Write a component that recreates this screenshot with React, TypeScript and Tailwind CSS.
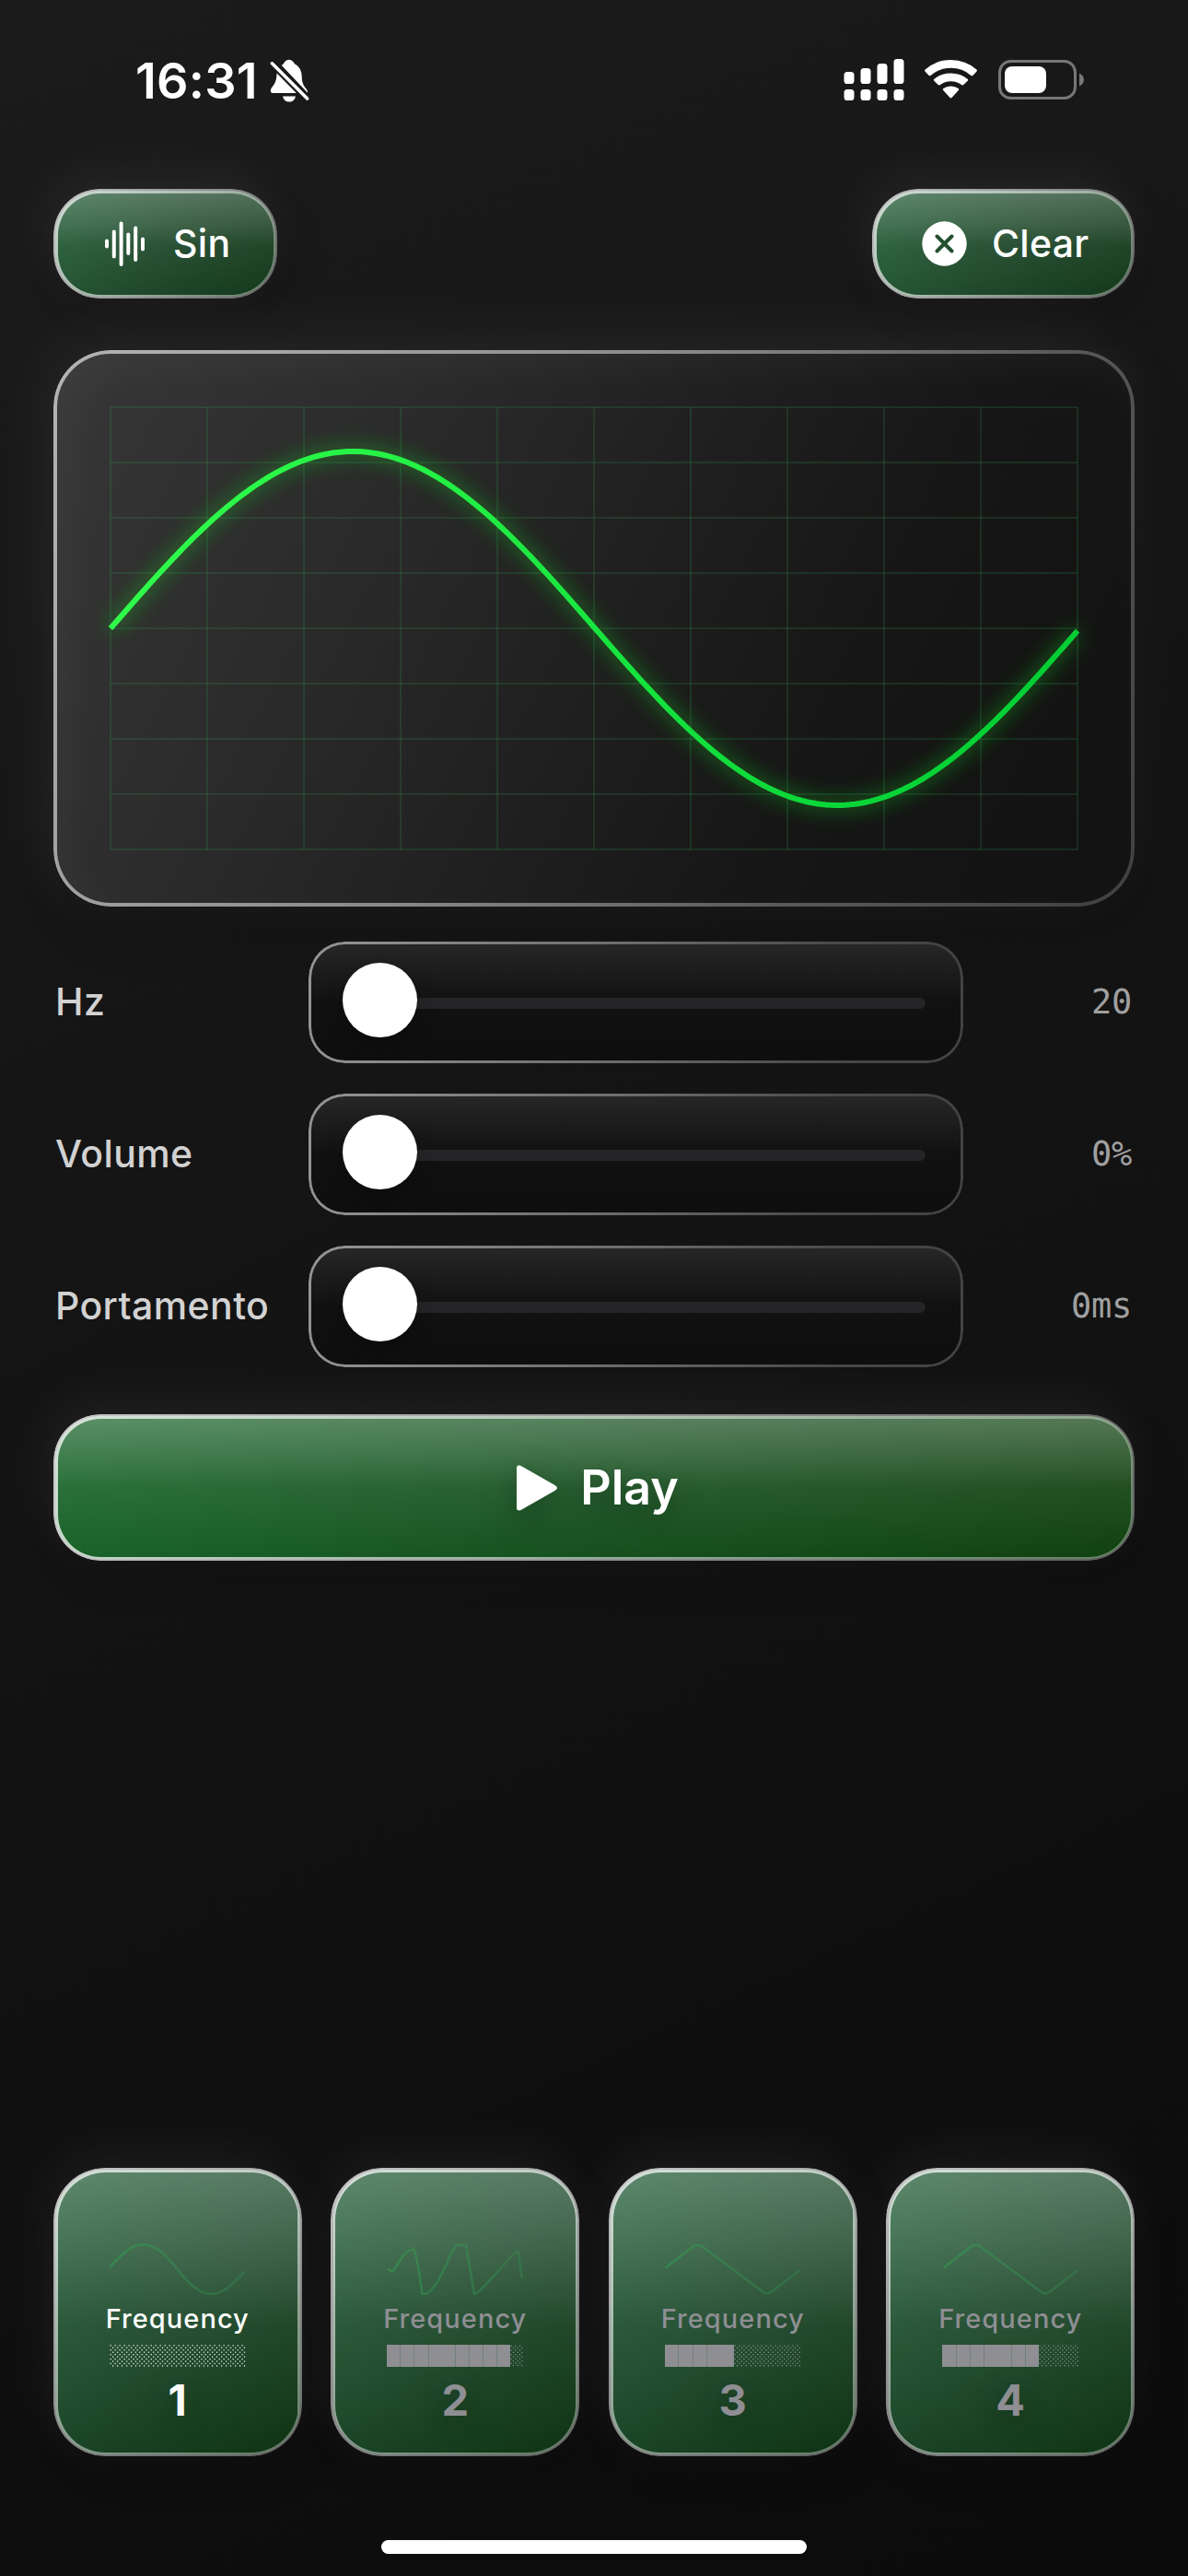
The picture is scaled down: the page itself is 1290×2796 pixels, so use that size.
import type { ReactNode } from "react";

type SliderRow = { label: string; value: string };
type Preset = { id: number; active?: boolean; level: number; wave: string };

const SINE_SAMPLES = 200;

function sinePath(width: number, mid: number, amp: number, cycles: number) {
  let d = "";
  for (let i = 0; i <= SINE_SAMPLES; i++) {
    const t = i / SINE_SAMPLES;
    const x = t * width;
    const y = mid - amp * Math.sin(t * cycles * Math.PI * 2);
    d += `${i === 0 ? "M" : "L"}${x.toFixed(2)} ${y.toFixed(2)}`;
  }
  return d;
}

const SLIDERS: SliderRow[] = [
  { label: "Hz", value: "20" },
  { label: "Volume", value: "0%" },
  { label: "Portamento", value: "0ms" },
];

const TRIANGLE = "M0.5 26.5L31 3Q35.5 0.5 40 3L107 53Q111 55.5 115 53L146 29.5";

const PRESETS: Preset[] = [
  { id: 1, active: true, level: 0, wave: "" },
  {
    id: 2,
    level: 9,
    wave: "M0 28L5 30.5C10 26 14 15 19 11Q24 6.5 28.5 6.5C33 18 35 38 37.5 55C48 57 58 35 64 22Q70 7 75.5 1.5L85 1.5L94 55.5L100 51.5L115 35.5L131 17.5Q138 9.5 141.5 9L146 38",
  },
  { id: 3, level: 5, wave: TRIANGLE },
  { id: 4, level: 7, wave: TRIANGLE },
];

/** Diagonal hairline drawn centred on the edge of its rounded parent. */
function Rim({ className }: { className: string }) {
  return (
    <div
      className={`pointer-events-none absolute [mask:linear-gradient(#000_0_0)_content-box_exclude,linear-gradient(#000_0_0)] ${className}`}
    />
  );
}

function GlassButton({ className, rim, children }: { className: string; rim: string; children: ReactNode }) {
  return (
    <button
      className={`relative flex items-center text-white shadow-[-6px_-14px_56px_rgba(255,255,255,0.07),12px_18px_44px_rgba(0,0,0,0.16)] ${className}`}
    >
      {children}
      <Rim className={`-inset-[2.25px] p-[4.5px] ${rim}`} />
    </button>
  );
}

function StatusBar() {
  return (
    <div className="flex h-[207px] items-start justify-between pr-[113px] pl-[147px] text-white">
      <div className="flex pt-[55px]">
        <span className="w-[132px] text-[54px] leading-[65px] font-semibold tracking-[0.2px] whitespace-nowrap">
          16:31
        </span>
        <svg className="mt-[9px] ml-[14px]" width="43" height="48" viewBox="0 0 43 48" fill="white">
          <path d="M7.700 14.500L29.500 37H3.200Q0.600 37 0.800 34Q1 32 4 28.500Q7 24.500 7.500 17Z" />
          <path d="M13.200 6.500Q15.300 5.500 15.800 3.500Q17.500 0.800 20.800 0.800Q24 0.800 25.800 3.500Q26.400 5.500 28.500 6.300Q34.500 10 34.700 19Q34.800 27 38.500 31.200Q41.600 34.400 41 36.800L13 7.200Z" />
          <path d="M14 40.600H28Q26.800 46.600 21 46.600Q15.200 46.600 14 40.600Z" />
          <path d="M2.200 4.300L40.800 43.500" stroke="#191919" strokeWidth="8" />
          <path d="M2.400 4.800L40.600 43" stroke="white" strokeWidth="3.600" strokeLinecap="round" />
        </svg>
      </div>
      <div className="flex items-start pt-[63px]">
        <svg width="68" height="48" viewBox="0 0 68 48" fill="white">
          <rect x="1.500" y="15" width="11" height="13" rx="3.600" />
          <rect x="19.500" y="11" width="11" height="17" rx="3.600" />
          <rect x="37.500" y="6" width="11" height="22" rx="3.600" />
          <rect x="55.500" y="1" width="11" height="27" rx="3.600" />
          <rect x="1.500" y="34" width="11" height="12" rx="3.600" />
          <rect x="19.500" y="34" width="11" height="12" rx="3.600" />
          <rect x="37.500" y="34" width="11" height="12" rx="3.600" />
          <rect x="55.500" y="34" width="11" height="12" rx="3.600" />
        </svg>
        <svg className="ml-[20px]" width="59" height="46" viewBox="0 0 59 46" fill="white">
          <path d="M1.500 14.500Q0.600 13.500 1.600 12.500Q13.500 2 29.500 2Q45.500 2 57.400 12.500Q58.400 13.500 57.500 14.500L53.300 18.900Q52.400 19.800 51.400 18.900Q42 10.800 29.500 10.800Q17 10.800 7.600 18.900Q6.600 19.800 5.700 18.900Z" />
          <path d="M11.300 24.700Q10.400 23.700 11.400 22.800Q19 16.500 29.500 16.500Q40 16.500 47.600 22.800Q48.600 23.700 47.700 24.700L43.300 29.100Q42.400 30 41.300 29.200Q36.200 25.200 29.500 25.200Q22.800 25.200 17.700 29.200Q16.600 30 15.700 29.100Z" />
          <path d="M21.200 35Q20.200 34 21.300 33.100Q24.800 30.500 29.500 30.500Q34.200 30.500 37.700 33.100Q38.800 34 37.800 35L30.500 43.100Q29.500 44 28.500 43.100Z" />
        </svg>
        <svg className="-mr-px ml-[22px]" width="94" height="46" viewBox="0 0 94 46">
          <rect x="1.500" y="3.500" width="82" height="40" rx="12" fill="none" stroke="#777777" strokeWidth="3" />
          <rect x="7" y="9" width="45" height="29" rx="8" fill="white" />
          <path d="M88 16.500Q93 19 93 23.500Q93 28 88 30.500Z" fill="#777777" />
        </svg>
      </div>
    </div>
  );
}

function Oscilloscope() {
  return (
    <section className="relative mt-[60px] h-[600px] rounded-[60px] bg-[linear-gradient(117deg,#373737_0%,#2a2a2a_30%,#1f1f1f_52%,#161616_72%,#121212_100%)] p-[60px] shadow-[-10px_-14px_70px_rgba(255,255,255,0.07),14px_24px_60px_rgba(0,0,0,0.16),inset_14px_14px_50px_rgba(255,255,255,0.04)]">
      <svg className="block overflow-visible" width="1050" height="480" viewBox="0 0 1050 480">
        <defs>
          <linearGradient id="trace" x1="0" y1="0" x2="1050" y2="400" gradientUnits="userSpaceOnUse">
            <stop offset="0" stopColor="#33ff4d" />
            <stop offset="1" stopColor="#00cc33" />
          </linearGradient>
          <filter id="halo" x="-100" y="-100" width="1250" height="680" filterUnits="userSpaceOnUse">
            <feGaussianBlur stdDeviation="11" />
          </filter>
        </defs>
        <g stroke="#33a65a" strokeOpacity="0.18" strokeWidth="2">
          {Array.from({ length: 11 }, (_, i) => (
            <line key={`v${i}`} x1={i * 105} x2={i * 105} y1="0" y2="480" />
          ))}
          {Array.from({ length: 9 }, (_, i) => (
            <line key={`h${i}`} y1={i * 60} y2={i * 60} x1="0" x2="1050" />
          ))}
        </g>
        <g fill="none">
          <path
            d={sinePath(1050, 240, 192, 0.9978)}
            stroke="#12c81f"
            strokeWidth="10"
            filter="url(#halo)"
            opacity="0.55"
          />
          <path d={sinePath(1050, 240, 192, 0.9978)} stroke="url(#trace)" strokeWidth="6" />
        </g>
      </svg>
      <Rim className="-inset-[2px] rounded-[62px] bg-[linear-gradient(117deg,#b4b4b4_0%,#8a8a8a_45%,#585858_75%,#404040_100%)] p-[4px]" />
    </section>
  );
}

function Slider({ label, value }: SliderRow) {
  return (
    <div className="flex h-[129px] items-center gap-[36px]">
      <span className="w-[240px] text-[41px] font-medium tracking-[0.4px] whitespace-nowrap text-[#d2d2d2]">{label}</span>
      <div className="relative flex h-[129px] w-[708px] items-center rounded-[38px] bg-[linear-gradient(180deg,#272727_0%,#111111_50%,#0e0e0e_100%)] px-[39px]">
        <div className="mt-[3px] h-[12px] w-full rounded-full bg-[#252527]" />
        <div className="absolute top-[22px] left-[35.500px] size-[81px] rounded-full bg-white shadow-[0_8px_20px_rgba(0,0,0,0.25)]" />
        <Rim className="-inset-[1.500px] rounded-[39.500px] bg-[linear-gradient(100deg,#959595_0%,#6e6e6e_45%,#484848_80%,#424242_100%)] p-[3px]" />
      </div>
      <span className="w-[150px] pr-px text-right font-['DejaVu_Sans_Mono',monospace] text-[37px] tracking-[-0.3px] whitespace-nowrap text-[#a0a0a0]">
        {value}
      </span>
    </div>
  );
}

function LevelMeter({ level, active }: { level: number; active?: boolean }) {
  return (
    <div className="mt-[9px] flex h-[24px] w-[148px]">
      {Array.from({ length: 10 }, (_, i) =>
        i < level ? (
          <div key={i} className={`flex-1 bg-[#8e8e93] ${i > 0 && i !== 4 ? "border-l border-[#728176]" : ""}`} />
        ) : (
          <svg key={i} className="flex-1" width="14.8" height="24" viewBox="0 0 14.8 24" fill={active ? "#ffffff" : "#98989c"}>
            {Array.from({ length: 30 }, (_, k) => {
              const row = Math.floor(k / 3);
              return (
                <rect key={k} x={0.6 + (k % 3) * 4.93 + (row % 2) * 2.46} y={0.2 + row * 2.46} width="1.2" height="1.2" />
              );
            })}
          </svg>
        ),
      )}
    </div>
  );
}

function PresetCard({ preset }: { preset: Preset }) {
  const tone = preset.active ? "text-white" : "text-[#8e8e93]";
  return (
    <GlassButton
      className="h-[309px] flex-1 flex-col rounded-[54px] bg-[linear-gradient(180deg,rgba(255,255,255,0.26)_0%,rgba(255,255,255,0.14)_32%,rgba(255,255,255,0.05)_55%,rgba(255,255,255,0)_100%),linear-gradient(139deg,#25603a_0%,#1e4a2c_45%,#0e3213_100%)] pt-[80px]"
      rim="rounded-[56px] bg-[linear-gradient(150deg,rgba(255,255,255,0.75)_0%,rgba(255,255,255,0.56)_45%,rgba(255,255,255,0.34)_100%)]"
    >
      <svg className="block" width="147" height="56" viewBox="0 0 147 56" fill="none">
        <defs>
          <linearGradient id={`fade${preset.id}`} x1="0" y1="0" x2="147" y2="56" gradientUnits="userSpaceOnUse">
            <stop offset="0" stopColor="#339a50" stopOpacity="0.6" />
            <stop offset="1" stopColor="#339050" stopOpacity="0.35" />
          </linearGradient>
        </defs>
        <path
          d={preset.wave || "M0.500 25.500C14 11 24 1.200 36 1.200C67 1.200 80 54.800 111 54.800C124 54.800 134 44 146.500 30.500"}
          stroke={`url(#fade${preset.id})`}
          strokeWidth="2.600"
        />
      </svg>
      <span className={`mt-[7px] text-[29px] leading-[38px] font-medium tracking-[1.05px] ${tone}`}>Frequency</span>
      <LevelMeter level={preset.level} active={preset.active} />
      <span className={`mt-[8px] text-[47px] leading-[56px] font-bold ${tone} [text-shadow:0_6px_30px_rgba(0,0,0,0.3)]`}>
        {preset.id}
      </span>
    </GlassButton>
  );
}

const PILL =
  "h-[115px] rounded-[48px] bg-[linear-gradient(180deg,rgba(255,255,255,0.26)_0%,rgba(255,255,255,0.14)_33%,rgba(255,255,255,0.05)_52%,rgba(255,255,255,0)_100%),linear-gradient(120deg,#265f3a_0%,#1f482a_50%,#13371a_100%)] text-[41px] font-medium";
const PILL_RIM =
  "rounded-[50px] bg-[linear-gradient(115deg,rgba(255,255,255,0.72)_0%,rgba(255,255,255,0.54)_45%,rgba(255,255,255,0.33)_100%)]";

export default function App() {
  return (
    <div className="flex h-[2796px] w-[1290px] flex-col overflow-hidden bg-[linear-gradient(155deg,#1b1b1b_0%,#131313_50%,#0b0b0b_100%)] font-['Inter',sans-serif]">
      <StatusBar />
      <main className="flex flex-1 flex-col px-[60px]">
        <div className="flex justify-between">
          <GlassButton className={`${PILL} w-[239px] pl-[54px]`} rim={PILL_RIM}>
            <svg width="43" height="50" viewBox="0 0 43 50" stroke="white" strokeWidth="4" strokeLinecap="round">
              <path d="M2 21.500V27.500M9.800 11.500V38.500M17.600 2.500V47M25.300 14.500V35M33.200 7.500V42M41 19.500V30.500" />
            </svg>
            <span className="ml-[31px] tracking-[0.3px]">Sin</span>
          </GlassButton>
          <GlassButton className={`${PILL} w-[281px] pl-[52px]`} rim={PILL_RIM}>
            <svg width="49" height="49" viewBox="0 0 49 49">
              <circle cx="24.500" cy="24.500" r="24.200" fill="white" />
              <path d="M16.500 16.500L32.500 32.500M32.500 16.500L16.500 32.500" stroke="#24502f" strokeWidth="4" strokeLinecap="round" />
            </svg>
            <span className="ml-[27px] tracking-[0.3px]">Clear</span>
          </GlassButton>
        </div>

        <Oscilloscope />

        <div className="mt-[41px] flex flex-col gap-[36px]">
          {SLIDERS.map((s) => (
            <Slider key={s.label} {...s} />
          ))}
        </div>

        <GlassButton
          className="mt-[55px] h-[155px] w-full justify-center rounded-[49px] bg-[linear-gradient(180deg,rgba(255,255,255,0.29)_0%,rgba(255,255,255,0.17)_30%,rgba(255,255,255,0.08)_50%,rgba(255,255,255,0)_100%),linear-gradient(102deg,#186429_0%,#16501f_50%,#10400f_100%)] pl-[8px] text-[52px] font-semibold"
          rim="rounded-[51px] bg-[linear-gradient(98deg,rgba(255,255,255,0.76)_0%,rgba(255,255,255,0.55)_50%,rgba(255,255,255,0.33)_100%)]"
        >
          <svg className="drop-shadow-[0_10px_18px_rgba(0,0,0,0.3)]" width="44" height="50" viewBox="0 0 44 50" fill="white">
            <path d="M0 3.500Q0 0.500 2.500 0.500Q4 0.500 5.500 1.400L41.500 22Q44 23.500 44 25Q44 26.500 41.500 28L5.500 48.600Q4 49.500 2.500 49.500Q0 49.500 0 46.500Z" />
          </svg>
          <span className="ml-[25px] [text-shadow:0_10px_30px_rgba(0,0,0,0.3)]">Play</span>
        </GlassButton>

        <div className="mt-auto flex gap-[36px]">
          {PRESETS.map((p) => (
            <PresetCard key={p.id} preset={p} />
          ))}
        </div>
      </main>
      <div className="flex h-[132px] flex-col items-center pt-[93px]">
        <div className="h-[15px] w-[462px] rounded-full bg-white" />
      </div>
    </div>
  );
}
